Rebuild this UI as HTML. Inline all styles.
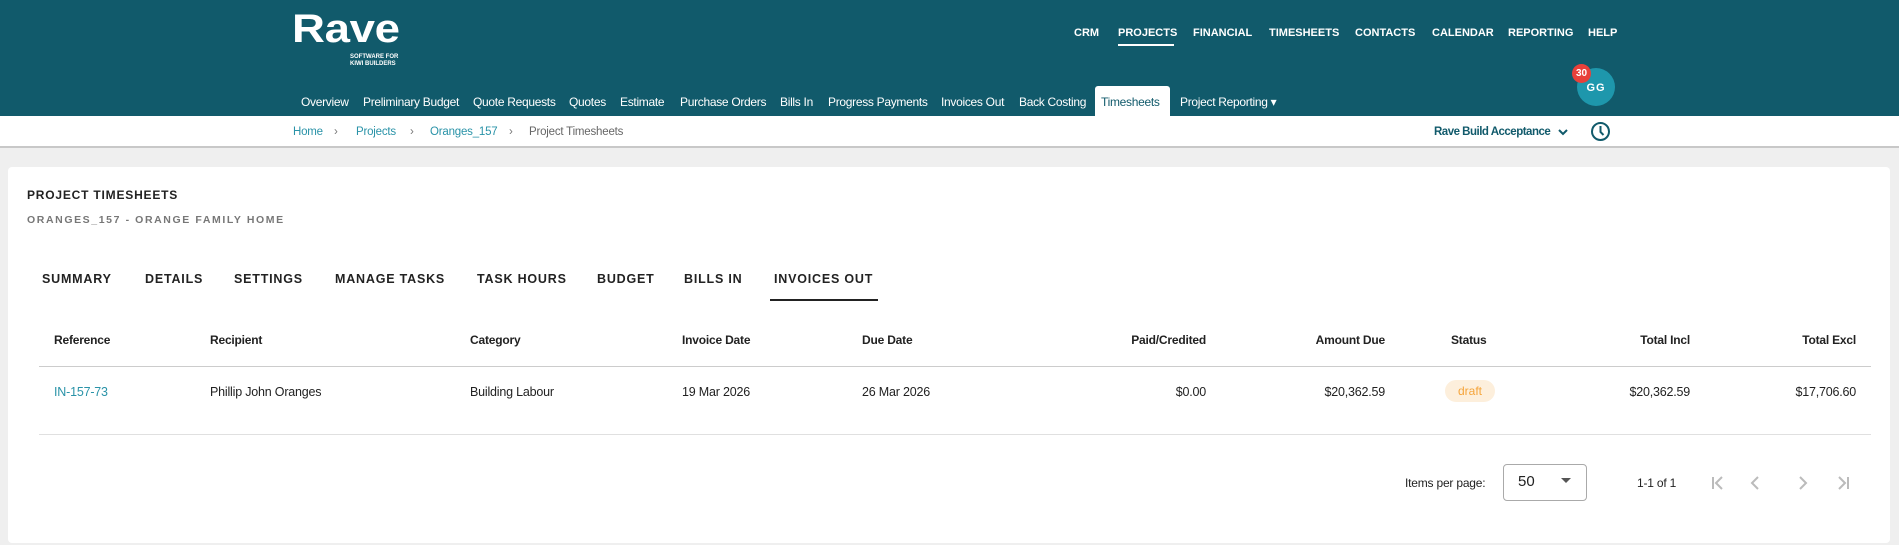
<!DOCTYPE html>
<html><head><meta charset="utf-8"><style>
*{margin:0;padding:0;box-sizing:border-box}
body{width:1899px;height:545px;overflow:hidden;background:#efefef;font-family:"Liberation Sans",sans-serif;color:#222;position:relative}
.abs{position:absolute;white-space:nowrap}
#hdr{position:absolute;left:0;top:0;width:1899px;height:116px;background:#115a6b}
.top{font-size:11px;font-weight:bold;color:#fff;top:27px}
.tab{font-size:12px;color:#fff;top:95px;letter-spacing:-0.3px}
#bc{position:absolute;left:0;top:116px;width:1899px;height:32px;background:#fff;border-bottom:2px solid #c8c8c8}
.bc{font-size:11.5px;top:126px;color:#2a93a8;letter-spacing:-0.2px}
#card{position:absolute;left:8px;top:167px;width:1882px;height:376px;background:#fff;border-radius:4px}
.th{font-size:12px;font-weight:bold;top:333px;color:#222;letter-spacing:-0.2px}
.td{font-size:12.5px;top:385px;color:#222;letter-spacing:-0.2px}
.r{text-align:right}
.ct{font-size:12.5px;font-weight:bold;top:272px;letter-spacing:0.8px;color:#222}
</style></head><body>
<div id="hdr"></div>
<div class="abs" style="left:292px;top:7px;font-size:40px;line-height:44px;font-weight:bold;color:#fff;letter-spacing:-0.3px;transform:scaleX(1.14);transform-origin:left">Rave</div>
<div class="abs" style="left:350px;top:54px;font-size:6px;font-weight:bold;color:#fff;line-height:7px">SOFTWARE FOR<br>KIWI BUILDERS</div>
<div class="abs top" style="left:1074px">CRM</div>
<div class="abs top" style="left:1118px">PROJECTS</div>
<div class="abs" style="left:1118px;top:44px;width:56px;height:2px;background:#fff"></div>
<div class="abs top" style="left:1193px">FINANCIAL</div>
<div class="abs top" style="left:1269px">TIMESHEETS</div>
<div class="abs top" style="left:1355px">CONTACTS</div>
<div class="abs top" style="left:1432px">CALENDAR</div>
<div class="abs top" style="left:1508px">REPORTING</div>
<div class="abs top" style="left:1588px">HELP</div>
<div class="abs tab" style="left:301px">Overview</div>
<div class="abs tab" style="left:363px">Preliminary Budget</div>
<div class="abs tab" style="left:473px">Quote Requests</div>
<div class="abs tab" style="left:569px">Quotes</div>
<div class="abs tab" style="left:620px">Estimate</div>
<div class="abs tab" style="left:680px">Purchase Orders</div>
<div class="abs tab" style="left:780px">Bills In</div>
<div class="abs tab" style="left:828px">Progress Payments</div>
<div class="abs" style="left:1095px;top:86px;width:75px;height:31px;background:#fff;border-radius:3px 3px 0 0"></div>
<div class="abs tab" style="left:1101px;color:#115a6b">Timesheets</div>
<div class="abs tab" style="left:1180px">Project Reporting ▾</div>
<div class="abs tab" style="left:941px">Invoices Out</div>
<div class="abs tab" style="left:1019px">Back Costing</div>
<div class="abs" style="left:1577px;top:68px;width:38px;height:38px;border-radius:50%;background:#1e97ac;color:#fff;font-size:11px;font-weight:bold;text-align:center;line-height:40px;letter-spacing:1px">GG</div>
<div class="abs" style="left:1572px;top:64px;width:19px;height:19px;border-radius:50%;background:#e8403a;color:#fff;font-size:10px;font-weight:bold;text-align:center;line-height:19px">30</div>
<div id="bc"></div>
<div class="abs bc" style="left:293px">Home</div>
<div class="abs bc" style="left:334px;color:#777">›</div>
<div class="abs bc" style="left:356px">Projects</div>
<div class="abs bc" style="left:410px;color:#777">›</div>
<div class="abs bc" style="left:430px">Oranges_157</div>
<div class="abs bc" style="left:509px;color:#777">›</div>
<div class="abs bc" style="left:529px;color:#666">Project Timesheets</div>
<div class="abs" style="left:1434px;top:126px;font-size:11.5px;font-weight:bold;color:#115a6b;letter-spacing:-0.5px">Rave Build Acceptance</div>
<svg class="abs" style="left:1557px;top:127px" width="12" height="10"><path d="M2 3l4 4 4-4" stroke="#115a6b" stroke-width="2" fill="none"/></svg>
<svg class="abs" style="left:1590px;top:121px" width="21" height="21"><circle cx="10.5" cy="10.5" r="8.5" stroke="#115a6b" stroke-width="2" fill="none"/><path d="M10.5 5v6l3 3" stroke="#115a6b" stroke-width="2" fill="none"/></svg>
<div id="card"></div>
<div class="abs" style="left:27px;top:188px;font-size:12px;font-weight:bold;letter-spacing:0.8px">PROJECT TIMESHEETS</div>
<div class="abs" style="left:27px;top:214px;font-size:10.5px;font-weight:bold;letter-spacing:1.6px;color:#777">ORANGES_157 - ORANGE FAMILY HOME</div>
<div class="abs ct" style="left:42px">SUMMARY</div>
<div class="abs ct" style="left:145px">DETAILS</div>
<div class="abs ct" style="left:234px">SETTINGS</div>
<div class="abs ct" style="left:335px">MANAGE TASKS</div>
<div class="abs ct" style="left:477px">TASK HOURS</div>
<div class="abs ct" style="left:597px">BUDGET</div>
<div class="abs ct" style="left:684px">BILLS IN</div>
<div class="abs ct" style="left:774px">INVOICES OUT</div>
<div class="abs" style="left:770px;top:299px;width:108px;height:2px;background:#222"></div>
<div class="abs th" style="left:54px">Reference</div>
<div class="abs th" style="left:210px">Recipient</div>
<div class="abs th" style="left:470px">Category</div>
<div class="abs th" style="left:682px">Invoice Date</div>
<div class="abs th" style="left:862px">Due Date</div>
<div class="abs th r" style="left:1006px;width:200px">Paid/Credited</div>
<div class="abs th r" style="left:1185px;width:200px">Amount Due</div>
<div class="abs th" style="left:1451px">Status</div>
<div class="abs th r" style="left:1490px;width:200px">Total Incl</div>
<div class="abs th r" style="left:1656px;width:200px">Total Excl</div>
<div class="abs" style="left:39px;top:366px;width:1832px;height:1px;background:#ccc"></div>
<div class="abs td" style="left:54px;color:#2a93a8">IN-157-73</div>
<div class="abs td" style="left:210px">Phillip John Oranges</div>
<div class="abs td" style="left:470px">Building Labour</div>
<div class="abs td" style="left:682px">19 Mar 2026</div>
<div class="abs td" style="left:862px">26 Mar 2026</div>
<div class="abs td r" style="left:1006px;width:200px">$0.00</div>
<div class="abs td r" style="left:1185px;width:200px">$20,362.59</div>
<div class="abs" style="left:1445px;top:380px;width:50px;height:22px;border-radius:11px;background:#fdefdc;color:#f5a43a;font-size:12px;text-align:center;line-height:22px">draft</div>
<div class="abs td r" style="left:1490px;width:200px">$20,362.59</div>
<div class="abs td r" style="left:1656px;width:200px">$17,706.60</div>
<div class="abs" style="left:39px;top:434px;width:1832px;height:1px;background:#e0e0e0"></div>
<div class="abs" style="left:1405px;top:476px;font-size:12px;letter-spacing:-0.2px">Items per page:</div>
<div class="abs" style="left:1503px;top:464px;width:84px;height:37px;border:1px solid #aaa;border-radius:4px"></div>
<div class="abs" style="left:1518px;top:473px;font-size:15px">50</div>
<svg class="abs" style="left:1561px;top:478px" width="10" height="6"><path d="M0 0h10L5 5z" fill="#555"/></svg>
<div class="abs" style="left:1637px;top:476px;font-size:12px;letter-spacing:-0.2px">1-1 of 1</div>
<svg class="abs" style="left:1710px;top:474px" width="150" height="18" fill="none" stroke="#bbb" stroke-width="2"><path d="M3 3v12M12 3L6 9l6 6"/><path d="M48 3L42 9l6 6"/><path d="M90 3l6 6-6 6"/><path d="M129 3l6 6-6 6M138 3v12"/></svg>
</body></html>
